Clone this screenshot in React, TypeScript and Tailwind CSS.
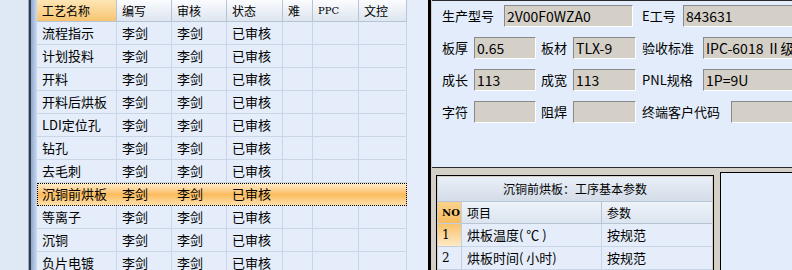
import React from 'react';

const cjk = { fontFamily: '"Noto Sans CJK SC", "Noto Sans", sans-serif' };

const processes = ['流程指示', '计划投料', '开料', '开料后烘板', 'LDI定位孔', '钻孔', '去毛刺', '沉铜前烘板', '等离子', '沉铜', '负片电镀'];
const colW = ['w-[80px]', 'w-[55px]', 'w-[55px]', 'w-[56px]', 'w-[30px]', 'w-[46px]', 'w-[48px]'];
const headers = ['工艺名称', '编写', '审核', '状态', '难', 'PPC', '文控'];

function Field({ w, value }: { w: string; value?: string }) {
  return (
    <div className={`${w} h-[22px] shrink-0 bg-[#d4d0c8] border-t border-l border-[#8a8a8a] border-b-white border-r-white border-b border-r flex items-center pl-[2px] text-[14px] text-black whitespace-nowrap overflow-hidden`}>
      {value}
    </div>
  );
}

function ProcessTable() {
  return (
    <div className="w-[391px] h-full bg-[#e4edf9] flex flex-col text-black">
      <div className="flex h-[22px] shrink-0">
        {headers.map((h, i) => (
          <div
            key={h}
            className={`${colW[i]} h-full shrink-0 border-r border-b border-[#b6c4d6] flex items-center pl-[5px] text-[12px] overflow-hidden whitespace-nowrap ${
              i === 0 ? 'bg-linear-to-b from-[#fde6b4] to-[#f7c470]' : 'bg-linear-to-b from-[#fbfcfe] to-[#dde5ef]'
            }`}
          >
            {h === 'PPC' ? <span className="text-[10px]" style={{ fontFamily: '"DejaVu Serif", serif' }}>PPC</span> : h}
          </div>
        ))}
      </div>
      {processes.map((p) => {
        const sel = p === '沉铜前烘板';
        return (
          <div
            key={p}
            className={`flex h-[23px] shrink-0 w-[370px] ${sel ? 'bg-linear-to-b from-[#fff0d2] via-[#fbbb5c] to-[#fde3b0] outline-1 outline-dotted outline-black -outline-offset-1' : ''}`}
          >
            {[p, '李剑', '李剑', '已审核', '', '', ''].map((t, i) => (
              <div key={i} className={`${colW[i]} h-full shrink-0 border-b ${sel ? 'border-transparent' : 'border-r border-[#c9d6e8]'} flex items-center pl-[5px] text-[13px] whitespace-nowrap overflow-hidden`}>
                {t}
              </div>
            ))}
          </div>
        );
      })}
    </div>
  );
}

function InfoForm() {
  return (
    <div className="h-[168px] shrink-0 bg-[#e2ecfa] border-t border-b border-[#2a2a2a] pl-[10px] pt-[4px] flex flex-col gap-[10px] text-[13px] text-black overflow-hidden">
      <div className="flex items-center">
        <span className="w-[62px] shrink-0">生产型号</span>
        <Field w="w-[129px]" value="2V00F0WZA0" />
        <span className="ml-[9px] w-[41px] shrink-0">E工号</span>
        <Field w="w-[140px]" value="843631" />
      </div>
      <div className="flex items-center">
        <span className="w-[32px] shrink-0">板厚</span>
        <Field w="w-[62px]" value="0.65" />
        <span className="ml-[5px] w-[32px] shrink-0">板材</span>
        <Field w="w-[63px]" value="TLX-9" />
        <span className="ml-[6px] w-[61px] shrink-0">验收标准</span>
        <Field w="w-[140px]" value="IPC-6018 Ⅱ级" />
      </div>
      <div className="flex items-center">
        <span className="w-[32px] shrink-0">成长</span>
        <Field w="w-[62px]" value="113" />
        <span className="ml-[5px] w-[32px] shrink-0">成宽</span>
        <Field w="w-[63px]" value="113" />
        <span className="ml-[6px] w-[61px] shrink-0">PNL规格</span>
        <Field w="w-[140px]" value="1P=9U" />
      </div>
      <div className="flex items-center">
        <span className="w-[32px] shrink-0">字符</span>
        <Field w="w-[62px]" />
        <span className="ml-[5px] w-[32px] shrink-0">阻焊</span>
        <Field w="w-[63px]" />
        <span className="ml-[6px] w-[89px] shrink-0">终端客户代码</span>
        <Field w="w-[140px]" />
      </div>
    </div>
  );
}

function ParamTable() {
  const rows = [
    ['1', '烘板温度( ℃ )', '按规范'],
    ['2', '烘板时间( 小时)', '按规范'],
  ];
  return (
    <div className="mt-[3px] w-[278px] shrink-0 border border-black p-[1px] bg-[#d4d0c8] flex flex-col text-black">
      <div className="h-[25px] shrink-0 bg-linear-to-b from-[#e9eff7] to-[#d3dce8] border-b border-[#b9c6d6] flex items-center justify-center text-[12px]">
        沉铜前烘板：工序基本参数
      </div>
      <div className="flex h-[22px] shrink-0 bg-[#e4edf9]">
        <div className="w-[24px] shrink-0 border-r border-b border-[#c3cfdf] bg-linear-to-b from-[#fbd28a] to-[#f5bd63] flex items-center pl-[4px] text-[10px] font-bold" style={{ fontFamily: '"DejaVu Serif", serif' }}>
          NO
        </div>
        <div className="w-[140px] shrink-0 border-r border-b border-[#b6c4d6] bg-linear-to-b from-[#eef3f9] to-[#dbe4ef] flex items-center pl-[5px] text-[12px]">项目</div>
        <div className="flex-1 border-b border-[#b6c4d6] bg-linear-to-b from-[#eef3f9] to-[#dbe4ef] flex items-center pl-[5px] text-[12px]">参数</div>
      </div>
      {rows.map((r, i) => (
        <div key={r[0]} className="flex h-[23px] shrink-0 bg-[#e4edf9]">
          <div
            className={`w-[24px] shrink-0 border-r border-b border-[#c3cfdf] flex items-center pl-[4px] text-[12px] ${i === 0 ? 'bg-linear-to-b from-[#f8c36b] to-[#fde9c4]' : ''}`}
            style={{ fontFamily: '"DejaVu Serif", serif' }}
          >
            {r[0]}
          </div>
          <div className="w-[140px] shrink-0 border-r border-b border-[#c9d6e8] flex items-center pl-[5px] text-[13px] whitespace-nowrap">{r[1]}</div>
          <div className="flex-1 border-b border-[#c9d6e8] flex items-center pl-[5px] text-[13px]">{r[2]}</div>
        </div>
      ))}
    </div>
  );
}

export default function App() {
  return (
    <div className="w-[792px] h-[270px] flex overflow-hidden bg-[#e2ecfa]" style={cjk}>
      <div className="w-[28px] shrink-0 bg-[#dfe9f6]" />
      <div className="w-[1px] shrink-0 bg-[#9aa8bb]" />
      <div className="w-[2px] shrink-0 bg-[#2f3a4a]" />
      <div className="w-[6px] shrink-0 bg-linear-to-r from-[#8ca9d1] to-[#cddbef]" />
      <ProcessTable />
      <div className="w-[3px] shrink-0 bg-black" />
      <div className="w-[1px] shrink-0 bg-[#d4d0c8]" />
      <div className="flex-1 flex flex-col min-w-0">
        <InfoForm />
        <div className="flex-1 flex bg-[#d4d0c8] pt-[4px] pl-[4px]">
          <ParamTable />
          <div className="ml-[6px] flex-1 border-l border-t border-black bg-[#e2ecfa]" />
        </div>
      </div>
    </div>
  );
}
